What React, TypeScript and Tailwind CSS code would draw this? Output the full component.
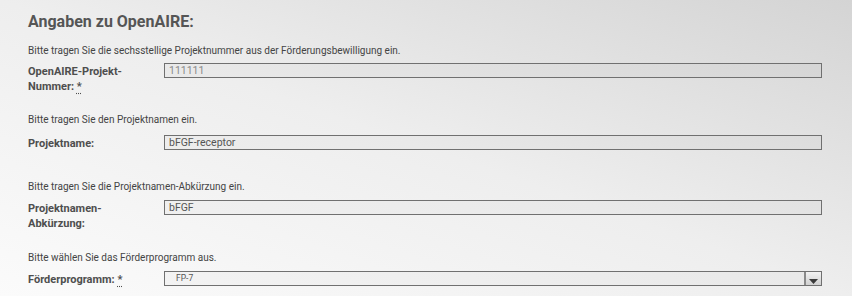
import React from 'react';

const font = { fontFamily: 'Roboto, "DejaVu Sans", sans-serif' };

function Required() {
  return (
    <abbr title="Pflichtfeld" className="underline decoration-dotted underline-offset-[3px] cursor-help">
      *
    </abbr>
  );
}

function Label({ children }: { children: React.ReactNode }) {
  return (
    <label className="w-[118px] mr-[18px] font-bold text-[11px] leading-[15px] text-[#4e4e4e] pt-[1px]">
      {children}
    </label>
  );
}

function Field({
  label,
  value,
  required,
  muted,
}: {
  label: string;
  value: string;
  required?: boolean;
  muted?: boolean;
}) {
  return (
    <div className="flex items-start">
      <Label>
        {label}
        {required && (
          <>
            {' '}
            <Required />
          </>
        )}
      </Label>
      <div
        className={`flex-1 h-[15px] border border-[#707070] bg-black/[0.02] px-[4px] text-[10.5px] leading-[13px] ${
          muted ? 'text-[#8a8a8a]' : 'text-[#555]'
        }`}
      >
        {value}
      </div>
    </div>
  );
}

function Help({ children, className = 'mb-[6px]' }: { children: React.ReactNode; className?: string }) {
  return <p className={`text-[10px] leading-[14px] text-[#444] ${className}`}>{children}</p>;
}

export default function App() {
  return (
    <div
      className="w-[852px] h-[296px] overflow-hidden bg-linear-to-bl from-[#d4d4d4] via-[#eeeeee] to-[#fbfbfb]"
      style={font}
    >
      <div className="pl-[28px] pr-[30px] pt-[11px]">
        <h2 className="text-[16px] font-bold text-[#555] leading-[22px] mb-[11px]">Angaben zu OpenAIRE:</h2>

        {/* Projektnummer */}
        <Help className="mb-[5px]">Bitte tragen Sie die sechsstellige Projektnummer aus der Förderungsbewilligung ein.</Help>
        <Field label="OpenAIRE-Projekt-Nummer:" value="111111" required muted />

        {/* Projektname */}
        <div className="mt-[19px]">
          <Help className="mb-[8px]">Bitte tragen Sie den Projektnamen ein.</Help>
          <Field label="Projektname:" value="bFGF-receptor" />
        </div>

        {/* Abkürzung */}
        <div className="mt-[29px]">
          <Help>Bitte tragen Sie die Projektnamen-Abkürzung ein.</Help>
          <Field label="Projektnamen-Abkürzung:" value="bFGF" />
        </div>

        {/* Förderprogramm */}
        <div className="mt-[20px]">
          <Help>Bitte wählen Sie das Förderprogramm aus.</Help>
          <div className="flex items-start">
            <Label>
              Förderprogramm: <Required />
            </Label>
            <div className="flex-1 h-[15px] border border-[#707070] flex items-stretch bg-black/[0.02]">
              <span className="flex-1 pl-[11px] text-[8.5px] leading-[13px] text-[#555]">FP-7</span>
              <span className="w-[17px] border-l-2 border-[#8a8a8a] bg-linear-to-b from-[#f2f2f2] to-[#d0d0d0] flex items-end justify-center pb-[1px]">
                <svg width="9" height="5" viewBox="0 0 9 5">
                  <path d="M0 0h9L4.5 5z" fill="#3a3a3a" />
                </svg>
              </span>
            </div>
          </div>
        </div>
      </div>
    </div>
  );
}
